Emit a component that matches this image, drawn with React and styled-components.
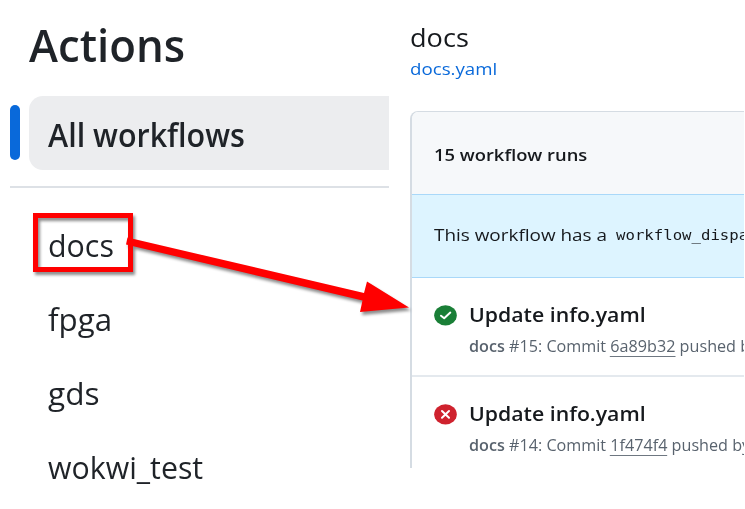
import React from 'react';
import styled, { createGlobalStyle } from 'styled-components';

const Global = createGlobalStyle`
  * { box-sizing: border-box; }
  body { margin: 0; background: #fff; overflow: hidden; }
`;

const Page = styled.div`
  position: relative;
  display: flex;
  gap: 21px;
  width: 745px;
  height: 509px;
  overflow: hidden;
  background: #fff;
  color: #1f2328;
  font-family: 'Open Sans', 'Noto Sans', sans-serif;
`;

const Label = styled.span`
  display: block;
  width: max-content;
  white-space: pre;
  font-size: ${(p) => p.$size}px;
  font-weight: ${(p) => p.$weight || 400};
  line-height: ${(p) => p.$line}px;
  transform: scaleX(${(p) => p.$stretch || 1});
  transform-origin: left center;
`;

const Sidebar = styled.nav`
  flex: none;
  width: 389px;
  padding: 14px 0 0 10px;
`;

const SidebarTitle = styled.h1`
  margin: 0 0 22px 19px;
  height: 60px;
`;

const Selected = styled.div`
  display: flex;
  align-items: flex-start;
  gap: 9px;
  height: 74px;
`;

const Marker = styled.div`
  width: 10px;
  height: 55px;
  margin-top: 9px;
  border-radius: 5px;
  background: #0969da;
`;

const SelectedItem = styled.div`
  flex: 1;
  height: 74px;
  padding-left: 19px;
  border-radius: 14px 0 0 14px;
  background: #ecedef;
`;

const Divider = styled.div`
  height: 2px;
  margin: 16px 0 20px;
  background: #dde1e6;
`;

const Item = styled.div`
  height: 74px;
  padding-left: 37.5px;
`;

const Main = styled.main`
  flex: none;
  width: 334px;
  height: 468px;
  padding-top: 18px;
  overflow: hidden;
  color: #16191d;
`;

const Link = styled.div`
  height: 26px;
  color: #0969da;
  margin: 0 0 29px;
`;

const Card = styled.section`
  height: 380px;
  width: 350px;
  border: 2px solid #d5dce3;
  border-width: 1.5px 0 0 2px;
  border-radius: 8px 0 0 0;
  overflow: hidden;
`;

const CardHeader = styled.div`
  display: flex;
  align-items: center;
  height: 82px;
  padding: 4px 0 0 22px;
  background: #f6f8fa;
`;

const Notice = styled.div`
  display: flex;
  align-items: center;
  height: 84px;
  padding: 0 0 2px 22px;
  border: solid #a9d8f9;
  border-width: 1px 0;
  background: #ddf4ff;
`;

const NoticeText = styled.div`
  width: 182px;
`;

const Code = styled(Label)`
  font-family: 'DejaVu Sans Mono', monospace;
`;

const Run = styled.article`
  display: flex;
  gap: 11.5px;
  height: 99px;
  padding: 21px 0 0 22px;
  border-bottom: 2px solid #e4e9ee;
`;

const StatusIcon = styled.svg`
  flex: none;
  width: 23px;
  height: 21px;
  margin-top: 6px;
`;

const Meta = styled.div`
  height: 24px;
  margin-top: 5px;
  color: #59636e;
`;

const Strong = styled.b`
  font-weight: 600;
`;

const Sha = styled.span`
  display: inline-block;
  line-height: 19px;
  border-bottom: 1.5px solid #6e7781;
`;

const Annotation = styled.svg`
  position: absolute;
  left: 0;
  top: 0;
  filter: drop-shadow(2px 3px 1.5px rgba(0, 0, 0, 0.45));
`;

const workflows = [
  { name: 'docs', stretch: 0.98 },
  { name: 'fpga', stretch: 1.01 },
  { name: 'gds', stretch: 1.02 },
  { name: 'wokwi_test', stretch: 0.978 },
];

const runs = [
  { number: 15, sha: '6a89b32', ok: true },
  { number: 14, sha: '1f474f4', ok: false },
];

function Status({ ok }) {
  return (
    <StatusIcon viewBox="0 0 23 21" fill="none">
      <ellipse cx="11.5" cy="10.3" rx="11.3" ry="10.1" fill={ok ? '#1a7f37' : '#cf222e'} />
      <path
        d={ok ? 'M7 10.700L10.200 13.300L16.300 7.600' : 'M8 7L15 13.700M15 7L8 13.700'}
        stroke="#fff"
        strokeWidth="2"
        strokeLinecap="round"
        strokeLinejoin="round"
      />
    </StatusIcon>
  );
}

export default function App() {
  return (
    <Page>
      <Global />
      <Sidebar>
        <SidebarTitle>
          <Label $size={46} $weight={600} $line={60} $stretch={0.952}>Actions</Label>
        </SidebarTitle>
        <Selected>
          <Marker />
          <SelectedItem>
            <Label $size={32} $weight={600} $line={77} $stretch={0.952}>All workflows</Label>
          </SelectedItem>
        </Selected>
        <Divider />
        {workflows.map((w) => (
          <Item key={w.name}>
            <Label $size={31} $line={75} $stretch={w.stretch}>{w.name}</Label>
          </Item>
        ))}
      </Sidebar>
      <Main>
        <Label $size={25} $line={38} $stretch={1.085}>docs</Label>
        <Link>
          <Label $size={17} $line={26} $stretch={1.1}>docs.yaml</Label>
        </Link>
        <Card>
          <CardHeader>
            <Label $size={17} $weight={600} $line={26} $stretch={1.08}>15 workflow runs</Label>
          </CardHeader>
          <Notice>
            <NoticeText>
              <Label $size={17} $line={26} $stretch={1.112}>This workflow has a</Label>
            </NoticeText>
            <Code $size={14} $line={28} $stretch={1.12}>workflow_dispa</Code>
          </Notice>
          {runs.map((run) => (
            <Run key={run.number}>
              <Status ok={run.ok} />
              <div>
                <Label $size={20.5} $weight={600} $line={30} $stretch={1.037}>Update info.yaml</Label>
                <Meta>
                  <Label $size={15.5} $line={24} $stretch={1.043}>
                    <Strong>docs</Strong>
                    {` #${run.number}: Commit `}
                    <Sha>{run.sha}</Sha>
                    {' pushed by'}
                  </Label>
                </Meta>
              </div>
            </Run>
          ))}
        </Card>
      </Main>
      <Annotation width="745" height="509" viewBox="0 0 745 509">
        <rect x="35.5" y="215.5" width="95" height="54" fill="none" stroke="#f00" strokeWidth="5" />
        <path d="M127.500 237.500L364 293L367 281.500L409 307.500L360 312L362.500 300.500L126 244.500Z" fill="#f00" />
      </Annotation>
    </Page>
  );
}
